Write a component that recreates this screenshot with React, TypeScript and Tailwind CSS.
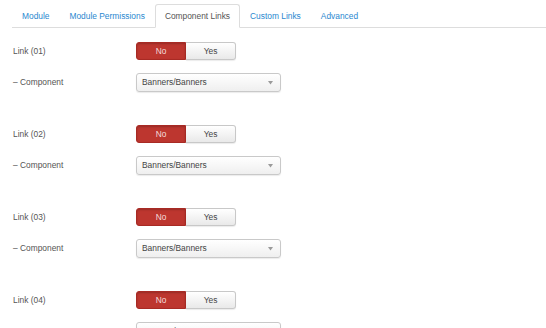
import React from "react";

const tabs = ["Module", "Module Permissions", "Component Links", "Custom Links", "Advanced"];

function Toggle() {
  return (
    <div className="flex h-[18px] w-[100px] text-[8.4px]">
      <div className="flex w-[50px] items-center justify-center rounded-l-[3px] border border-[#a82a24] bg-[#bd362f] text-[#f4dcdb] shadow-[inset_0_1px_2px_rgba(0,0,0,0.2)]">
        No
      </div>
      <div className="flex w-[50px] items-center justify-center rounded-r-[3px] border border-l-0 border-[#c8c8c8] bg-gradient-to-b from-white to-[#e9e9e9] text-[#444] shadow-[0_1px_1px_rgba(0,0,0,0.08)]">
        Yes
      </div>
    </div>
  );
}

function Select() {
  return (
    <div className="flex h-[19px] w-[145px] items-center justify-between rounded-[3px] border border-[#c9c9c9] bg-gradient-to-b from-white to-[#efefef] pl-[5px] pr-[7px] text-[8.4px] text-[#444] shadow-[0_1px_1px_rgba(0,0,0,0.08)]">
      <span>Banners/Banners</span>
      <svg width="5" height="4" viewBox="0 0 5 4">
        <path d="M0 0 L5 0 L2.5 3.5 Z" fill="#9a9a9a" />
      </svg>
    </div>
  );
}

function Group({ n }: { n: string }) {
  return (
    <div className="flex flex-col gap-[13px]">
      <div className="flex items-center">
        <div className="w-[123px] text-[#555]">Link ({n})</div>
        <Toggle />
      </div>
      <div className="flex items-center">
        <div className="w-[123px] text-[#555]">– Component</div>
        <Select />
      </div>
    </div>
  );
}

export default function App() {
  return (
    <div
      className="h-[328px] w-[546px] overflow-hidden bg-white text-[8.4px]"
      style={{ fontFamily: '"Liberation Sans", Arial, sans-serif' }}
    >
      <div className="ml-[12px] mt-[4px] flex border-b border-[#dddddd]">
        {tabs.map((t) => {
          const active = t === "Component Links";
          return (
            <div
              key={t}
              className={
                active
                  ? "-mb-px h-[24px] rounded-t-[3px] border border-[#dddddd] border-b-white bg-white px-[9px] leading-[22px] text-[#555]"
                  : "-mb-px h-[24px] border border-transparent px-[9px] leading-[22px] text-[#2a88cf]"
              }
            >
              {t}
            </div>
          );
        })}
      </div>
      <div className="ml-[13px] mt-[14px] flex flex-col gap-[33px]">
        <Group n="01" />
        <Group n="02" />
        <Group n="03" />
        <Group n="04" />
      </div>
    </div>
  );
}
